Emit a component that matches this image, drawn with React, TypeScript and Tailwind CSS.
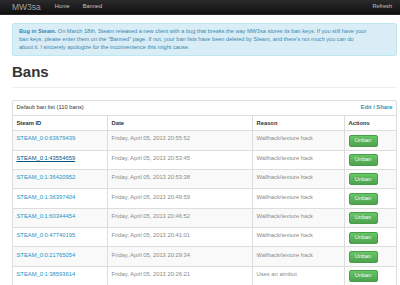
import React from 'react';

const bans = [
  { id: 'STEAM_0:0:63679439', date: 'Friday, April 05, 2013 20:55:52', reason: 'Wallhack/texture hack' },
  { id: 'STEAM_0:1:43554659', date: 'Friday, April 05, 2013 20:53:45', reason: 'Wallhack/texture hack', hover: true },
  { id: 'STEAM_0:1:36420952', date: 'Friday, April 05, 2013 20:53:38', reason: 'Wallhack/texture hack' },
  { id: 'STEAM_0:1:36397404', date: 'Friday, April 05, 2013 20:49:59', reason: 'Wallhack/texture hack' },
  { id: 'STEAM_0:1:60344454', date: 'Friday, April 05, 2013 20:46:52', reason: 'Wallhack/texture hack' },
  { id: 'STEAM_0:0:47740195', date: 'Friday, April 05, 2013 20:41:01', reason: 'Wallhack/texture hack' },
  { id: 'STEAM_0:0:21765054', date: 'Friday, April 05, 2013 20:29:34', reason: 'Wallhack/texture hack' },
  { id: 'STEAM_0:1:38593614', date: 'Friday, April 05, 2013 20:26:21', reason: 'Uses an aimbot' },
];

const App: React.FC = () => {
  return (
    <div className="w-[400px] h-[285px] overflow-hidden bg-white text-[#333] font-['Liberation_Sans',Arial,sans-serif]">
      {/* navbar */}
      <div className="h-[15px] bg-gradient-to-b from-[#2a2a2a] to-[#101010] border-b border-[#252525]">
        <div className="ml-[12px] w-[385px] h-full flex items-center">
          <span className="text-[8.5px] text-[#a0a0a0] leading-none">MW3sa</span>
          <span className="ml-[14px] text-[5.6px] text-[#c4c4c4] leading-none">Home</span>
          <span className="ml-[13px] text-[5.6px] text-[#c4c4c4] leading-none">Banned</span>
          <span className="ml-auto mr-[5px] text-[5.6px] text-[#c4c4c4] leading-none">Refresh</span>
        </div>
      </div>

      <div className="ml-[12px] w-[385px]">
        {/* alert */}
        <div className="mt-[8px] bg-[#d9edf7] border border-[#bce8f1] rounded-[2px] pt-[3px] pb-[3px] pl-[6px] pr-[10px] text-[5.6px] leading-[8.2px] text-[#3a87ad] whitespace-nowrap">
          <b>Bug in Steam.</b> On March 18th, Steam released a new client with a bug that breaks the way MW3sa stores its ban keys. If you still have your
          <br />
          ban keys, please enter them on the "Banned" page. If not, your ban lists have been deleted by Steam, and there's not much you can do
          <br />
          about it. I sincerely apologize for the inconvenience this might cause.
        </div>

        {/* page header */}
        <div className="mt-[7px] pb-[7px] border-b border-[#eee]">
          <h1 className="text-[15px] leading-[17px] font-bold text-[#333]">Bans</h1>
        </div>

        {/* table */}
        <div className="mt-[12px] border border-[#ddd] rounded-[2px] text-[5.8px] leading-[8.3px]">
          <div className="h-[15px] flex items-center justify-between px-[3.5px] border-b border-[#ddd]">
            <span>Default ban list (110 bans)</span>
            <span className="font-bold text-[#2f96b4]">Edit / Share</span>
          </div>
          <div className="grid grid-cols-[94px_145px_92px_1fr] h-[15.7px] font-bold border-b border-[#ddd]">
            <div className="flex items-center px-[3.5px]">Steam ID</div>
            <div className="flex items-center px-[3.5px] border-l border-[#ddd]">Date</div>
            <div className="flex items-center px-[3.5px] border-l border-[#ddd]">Reason</div>
            <div className="flex items-center px-[3.5px] border-l border-[#ddd]">Actions</div>
          </div>
          {bans.map((b, i) => (
            <div
              key={b.id}
              className={`grid grid-cols-[94px_145px_92px_1fr] h-[19.35px] border-b border-[#ddd] last:border-b-0 ${i % 2 === 0 ? 'bg-[#f9f9f9]' : 'bg-white'}`}
            >
              <div className="px-[3.5px] pt-[3.2px]">
                <span className={b.hover ? 'text-[#005580] underline' : 'text-[#1a94c8]'}>{b.id}</span>
              </div>
              <div className="px-[3.5px] pt-[3.2px] border-l border-[#ddd] text-[#8a8a8a]">{b.date}</div>
              <div className="px-[3.5px] pt-[3.2px] border-l border-[#ddd] text-[#8a8a8a]">{b.reason}</div>
              <div className="px-[3.5px] pt-[3.5px] border-l border-[#ddd]">
                <button className="h-[12px] w-[29px] rounded-[2px] border border-[#4a9c4a] bg-gradient-to-b from-[#66c866] to-[#4fa24f] text-white text-[5.6px] leading-none [text-shadow:0_-1px_0_rgba(0,0,0,0.2)]">
                  Unban
                </button>
              </div>
            </div>
          ))}
        </div>
      </div>
    </div>
  );
};

export default App;
